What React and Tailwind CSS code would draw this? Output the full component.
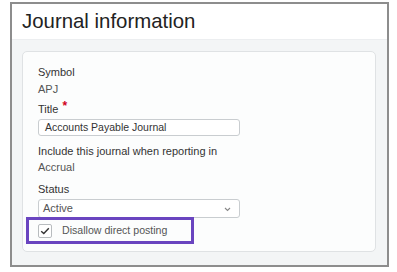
import React from "react";

export default function App() {
  const font = { fontFamily: '"Liberation Sans", Arial, sans-serif' };
  return (
    <div className="w-[397px] h-[272px] bg-white pt-[2px] pl-[10px]" style={font}>
      <div className="w-[379px] h-[265px] border-2 border-[#8d8d8d] flex flex-col bg-[#f3f5f6]">
        <div className="h-[36px] shrink-0 bg-white flex items-center pl-[10px] border-b border-[#eceef0]">
          <span className="text-[20.4px] leading-[23px] text-[#222]">Journal information</span>
        </div>
        <div className="flex-1 pt-[11px] pl-[10px] pr-[11px] pb-[13px]">
          <div className="h-full rounded-[5px] border border-[#dfe2e4] bg-[#fcfdfd] pl-[15px] pt-[13px] flex flex-col items-start">
            <div className="text-[11px] leading-[14px] text-[#333]">Symbol</div>
            <div className="mt-[3px] text-[11px] leading-[14px] text-[#555]">APJ</div>
            <div className="mt-[6px] text-[11px] leading-[14px] text-[#333]">
              Title<span className="ml-[4px] text-[#d0021b] font-bold text-[12px] relative -top-[3px]">*</span>
            </div>
            <div className="mt-[3px] w-[202px] h-[17px] border border-[#c9cdd0] rounded-[3px] bg-white flex items-center pl-[6px]">
              <span className="text-[10.5px] leading-[13px] text-[#333]">Accounts Payable Journal</span>
            </div>
            <div className="mt-[8px] text-[11px] leading-[14px] text-[#333]">Include this journal when reporting in</div>
            <div className="mt-[2px] text-[11px] leading-[14px] text-[#555]">Accrual</div>
            <div className="mt-[8px] text-[11px] leading-[14px] text-[#333]">Status</div>
            <div className="mt-[3px] w-[202px] h-[19px] border border-[#c9cdd0] rounded-[3px] bg-white flex items-center justify-between pl-[4px] pr-[8px]">
              <span className="text-[11px] leading-[13px] text-[#555]">Active</span>
              <svg width="7" height="5" viewBox="0 0 7 5" className="mt-[1px]">
                <path d="M1 1 L3.5 3.5 L6 1" fill="none" stroke="#888" strokeWidth="1.1" />
              </svg>
            </div>
            <div className="-mt-[1px] -ml-[12px] w-[168px] h-[27px] border-[3px] border-[#6a45c0] flex items-center pl-[9px] gap-[10px] relative">
              <div className="w-[14px] h-[14px] border border-[#b8bcbf] rounded-[2px] bg-white flex items-center justify-center">
                <svg width="10" height="8" viewBox="0 0 10 8">
                  <path d="M1.2 4.2 L3.8 6.6 L8.8 1.2" fill="none" stroke="#333" strokeWidth="1.4" />
                </svg>
              </div>
              <span className="text-[10.6px] leading-[13px] text-[#555]">Disallow direct posting</span>
            </div>
          </div>
        </div>
      </div>
    </div>
  );
}
